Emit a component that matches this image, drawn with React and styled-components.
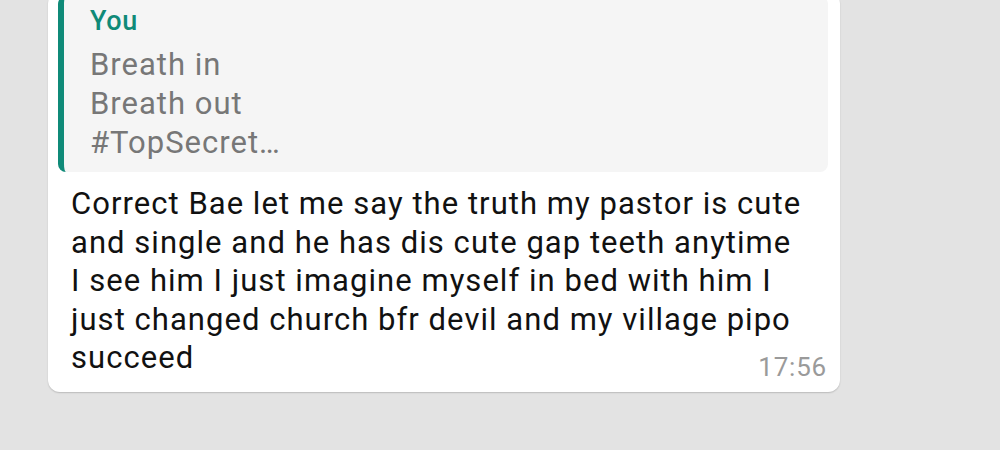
import React from "react";
import styled, { createGlobalStyle } from "styled-components";

const Global = createGlobalStyle`
  html, body { margin: 0; padding: 0; }
  body {
    background: #e3e3e3;
    font-family: Roboto, "Noto Sans", "Liberation Sans", sans-serif;
    width: 1000px;
    height: 450px;
    overflow: hidden;
  }
`;

const Page = styled.div`
  display: flex;
  flex-direction: column;
  align-items: flex-start;
  padding: 0 160px 0 48px;
  height: 450px;
  box-sizing: border-box;
`;

const Bubble = styled.div`
  width: 792px;
  box-sizing: border-box;
  margin-top: -8px;
  background: #ffffff;
  border-radius: 12px;
  box-shadow: 0 1px 1.5px rgba(0, 0, 0, 0.18);
  padding: 4px 12px 10px 10px;
  display: flex;
  flex-direction: column;
`;

const Quote = styled.div`
  background: #f5f5f5;
  border-left: 6px solid #0f8a78;
  border-radius: 8px;
  padding: 8px 16px 10px 26px;
  display: flex;
  flex-direction: column;
`;

const Author = styled.div`
  color: #0f8a78;
  font-size: 27px;
  font-weight: 500;
  letter-spacing: 0.6px;
  line-height: 34px;
  margin-bottom: 7px;
`;

const QuoteLine = styled.div`
  color: #777777;
  font-size: 31px;
  letter-spacing: 1px;
  line-height: 39px;
`;

const Body = styled.div`
  display: flow-root;
  padding: 13px 0 0 13px;
  width: 735px;
`;

const Text = styled.span`
  color: #111111;
  font-size: 31px;
  letter-spacing: 1.04px;
  line-height: 38.6px;
`;

const Time = styled.span`
  float: right;
  color: #9a9a9a;
  font-size: 26px;
  letter-spacing: 0.8px;
  line-height: 30px;
  margin-top: 13px;
  margin-right: -21px;
`;

export default function App() {
  return (
    <>
      <Global />
      <Page>
        <Bubble>
          <Quote>
            <Author>You</Author>
            <QuoteLine>Breath in</QuoteLine>
            <QuoteLine>Breath out</QuoteLine>
            <QuoteLine>#TopSecret…</QuoteLine>
          </Quote>
          <Body>
            <Text>
              Correct Bae let me say the truth my pastor is cute and single and
              he has dis cute gap teeth anytime I see him I just imagine myself
              in bed with him I just changed church bfr devil and my village
              pipo succeed
            </Text>
            <Time>17:56</Time>
          </Body>
        </Bubble>
      </Page>
    </>
  );
}
